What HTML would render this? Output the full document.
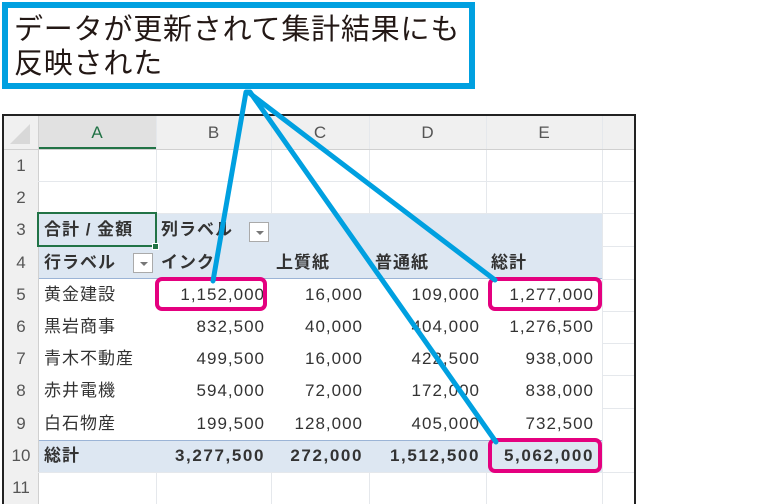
<!DOCTYPE html><html><head><meta charset="utf-8"><style>
body{margin:0;width:783px;height:504px;background:#fff;position:relative;overflow:hidden;font-family:"Liberation Sans","Noto Sans CJK JP",sans-serif;}
.a{position:absolute;box-sizing:border-box}
.frame{left:2px;top:114px;width:634px;height:390px;border:2px solid #222;border-bottom:none;background:#fff}
.hl{background:#e5e8ec;height:1px}
.vl{background:#e5e8ec;width:1px}
.t{font-size:17px;color:#333;line-height:32px;white-space:nowrap;letter-spacing:1px}
.r{text-align:right}
.b{font-weight:bold;letter-spacing:1.6px}
.rn{font-size:17px;color:#555;width:34px;text-align:center;line-height:32px}
.ch{font-size:17px;color:#555;text-align:center;line-height:32px;top:117px}
.dd{width:20px;height:20px;border:1px solid #aaa;background:#fff}
.dd:after{content:"";position:absolute;left:6px;top:8px;border:4px solid transparent;border-top:4px solid #777}
.pk{border:4px solid #e4007f;border-radius:7px}
</style></head><body>
<div class="a frame"></div>
<div class="a" style="left:4px;top:116px;width:630px;height:33px;background:#f0f0f0"></div>
<div class="a" style="left:4px;top:116px;width:34px;height:388px;background:#f0f0f0"></div>
<div class="a" style="left:38px;top:116px;width:118px;height:33px;background:#e1e1e1;border-bottom:2px solid #217346"></div>
<div class="a" style="left:38px;top:213px;width:564px;height:66px;background:#dde7f2"></div>
<div class="a" style="left:38px;top:440px;width:564px;height:32px;background:#dde7f2"></div>
<div class="a" style="left:38px;top:278px;width:564px;height:1px;background:#9bb4d6"></div>
<div class="a" style="left:38px;top:440px;width:564px;height:1px;background:#9bb4d6"></div>
<div class="a vl" style="left:156px;top:116px;height:97px"></div>
<div class="a vl" style="left:271px;top:116px;height:97px"></div>
<div class="a vl" style="left:369px;top:116px;height:97px"></div>
<div class="a vl" style="left:486px;top:116px;height:97px"></div>
<div class="a vl" style="left:602px;top:116px;height:388px"></div>
<div class="a vl" style="left:38px;top:116px;height:388px;background:#d0d0d0"></div>
<div class="a vl" style="left:156px;top:472px;height:32px"></div>
<div class="a vl" style="left:271px;top:472px;height:32px"></div>
<div class="a vl" style="left:369px;top:472px;height:32px"></div>
<div class="a vl" style="left:486px;top:472px;height:32px"></div>
<div class="a hl" style="left:4px;top:149px;width:630px;background:#d0d0d0"></div>
<div class="a hl" style="left:38px;top:181px;width:596px"></div>
<div class="a hl" style="left:38px;top:213px;width:596px"></div>
<div class="a hl" style="left:602px;top:246px;width:32px"></div>
<div class="a hl" style="left:602px;top:279px;width:32px"></div>
<div class="a hl" style="left:602px;top:311px;width:32px"></div>
<div class="a hl" style="left:602px;top:343px;width:32px"></div>
<div class="a hl" style="left:602px;top:375px;width:32px"></div>
<div class="a hl" style="left:602px;top:408px;width:32px"></div>
<div class="a hl" style="left:38px;top:472px;width:596px"></div>
<div class="a ch" style="left:38px;width:118px;color:#217346">A</div>
<div class="a ch" style="left:156px;width:115px">B</div>
<div class="a ch" style="left:271px;width:98px">C</div>
<div class="a ch" style="left:369px;width:117px">D</div>
<div class="a ch" style="left:486px;width:116px">E</div>
<div class="a" style="left:10px;top:124px;width:0;height:0;border-left:20px solid transparent;border-bottom:20px solid #d8d8d8"></div>
<div class="a rn" style="left:4px;top:150px">1</div>
<div class="a rn" style="left:4px;top:182px">2</div>
<div class="a rn" style="left:4px;top:214px">3</div>
<div class="a rn" style="left:4px;top:247px">4</div>
<div class="a rn" style="left:4px;top:279px">5</div>
<div class="a rn" style="left:4px;top:311px">6</div>
<div class="a rn" style="left:4px;top:343px">7</div>
<div class="a rn" style="left:4px;top:375px">8</div>
<div class="a rn" style="left:4px;top:408px">9</div>
<div class="a rn" style="left:4px;top:440px">10</div>
<div class="a rn" style="left:4px;top:472px">11</div>
<div class="a" style="left:37px;top:212px;width:120px;height:35px;border:2px solid #217346"></div>
<div class="a" style="left:152px;top:243px;width:7px;height:7px;background:#217346;border:1px solid #fff"></div>
<div class="a t b" style="left:44px;top:214px;letter-spacing:1px">合計 / 金額</div>
<div class="a t b" style="left:161px;top:214px;letter-spacing:1px">列ラベル</div>
<div class="a dd" style="left:249px;top:222px"></div>
<div class="a t b" style="left:44px;top:247px;letter-spacing:1px">行ラベル</div>
<div class="a dd" style="left:133px;top:253px"></div>
<div class="a t b" style="left:161px;top:247px;letter-spacing:1px">インク</div>
<div class="a t b" style="left:276px;top:247px;letter-spacing:1px">上質紙</div>
<div class="a t b" style="left:375px;top:247px;letter-spacing:1px">普通紙</div>
<div class="a t b" style="left:491px;top:247px;letter-spacing:1px">総計</div>
<div class="a t" style="left:44px;top:279px">黄金建設</div>
<div class="a t" style="left:44px;top:311px">黒岩商事</div>
<div class="a t" style="left:44px;top:343px">青木不動産</div>
<div class="a t" style="left:44px;top:375px">赤井電機</div>
<div class="a t" style="left:44px;top:408px">白石物産</div>
<div class="a t b" style="left:44px;top:440px;letter-spacing:1px">総計</div>
<div class="a t r" style="left:156px;width:109px;top:279px">1,152,000</div>
<div class="a t r" style="left:156px;width:109px;top:311px">832,500</div>
<div class="a t r" style="left:156px;width:109px;top:343px">499,500</div>
<div class="a t r" style="left:156px;width:109px;top:375px">594,000</div>
<div class="a t r" style="left:156px;width:109px;top:408px">199,500</div>
<div class="a t r b" style="left:156px;width:109px;top:440px">3,277,500</div>
<div class="a t r" style="left:271px;width:92px;top:279px">16,000</div>
<div class="a t r" style="left:271px;width:92px;top:311px">40,000</div>
<div class="a t r" style="left:271px;width:92px;top:343px">16,000</div>
<div class="a t r" style="left:271px;width:92px;top:375px">72,000</div>
<div class="a t r" style="left:271px;width:92px;top:408px">128,000</div>
<div class="a t r b" style="left:271px;width:92px;top:440px">272,000</div>
<div class="a t r" style="left:369px;width:111px;top:279px">109,000</div>
<div class="a t r" style="left:369px;width:111px;top:311px">404,000</div>
<div class="a t r" style="left:369px;width:111px;top:343px">422,500</div>
<div class="a t r" style="left:369px;width:111px;top:375px">172,000</div>
<div class="a t r" style="left:369px;width:111px;top:408px">405,000</div>
<div class="a t r b" style="left:369px;width:111px;top:440px">1,512,500</div>
<div class="a t r" style="left:486px;width:108px;top:279px">1,277,000</div>
<div class="a t r" style="left:486px;width:108px;top:311px">1,276,500</div>
<div class="a t r" style="left:486px;width:108px;top:343px">938,000</div>
<div class="a t r" style="left:486px;width:108px;top:375px">838,000</div>
<div class="a t r" style="left:486px;width:108px;top:408px">732,500</div>
<div class="a t r b" style="left:486px;width:108px;top:440px">5,062,000</div>
<div class="a pk" style="left:155px;top:277px;width:112px;height:34px"></div>
<div class="a pk" style="left:488px;top:277px;width:114px;height:34px"></div>
<div class="a pk" style="left:488px;top:438px;width:114px;height:35px"></div>
<svg class="a" style="left:0;top:0" width="783" height="504"><g stroke="#00a0e0" stroke-width="5" stroke-linecap="round"><line x1="246" y1="92" x2="213" y2="281"/><line x1="248" y1="92" x2="495" y2="280"/><line x1="250" y1="92" x2="496" y2="442"/></g></svg>
<div class="a" style="left:2px;top:2px;width:473px;height:87px;border:6px solid #00a0e0;background:#fff"></div>
<div class="a" style="left:14px;top:10px;font-size:29px;line-height:34px;color:#231815;font-family:'Noto Sans CJK JP',sans-serif;letter-spacing:0.8px">データが更新されて集計結果にも<br>反映された</div>
</body></html>
